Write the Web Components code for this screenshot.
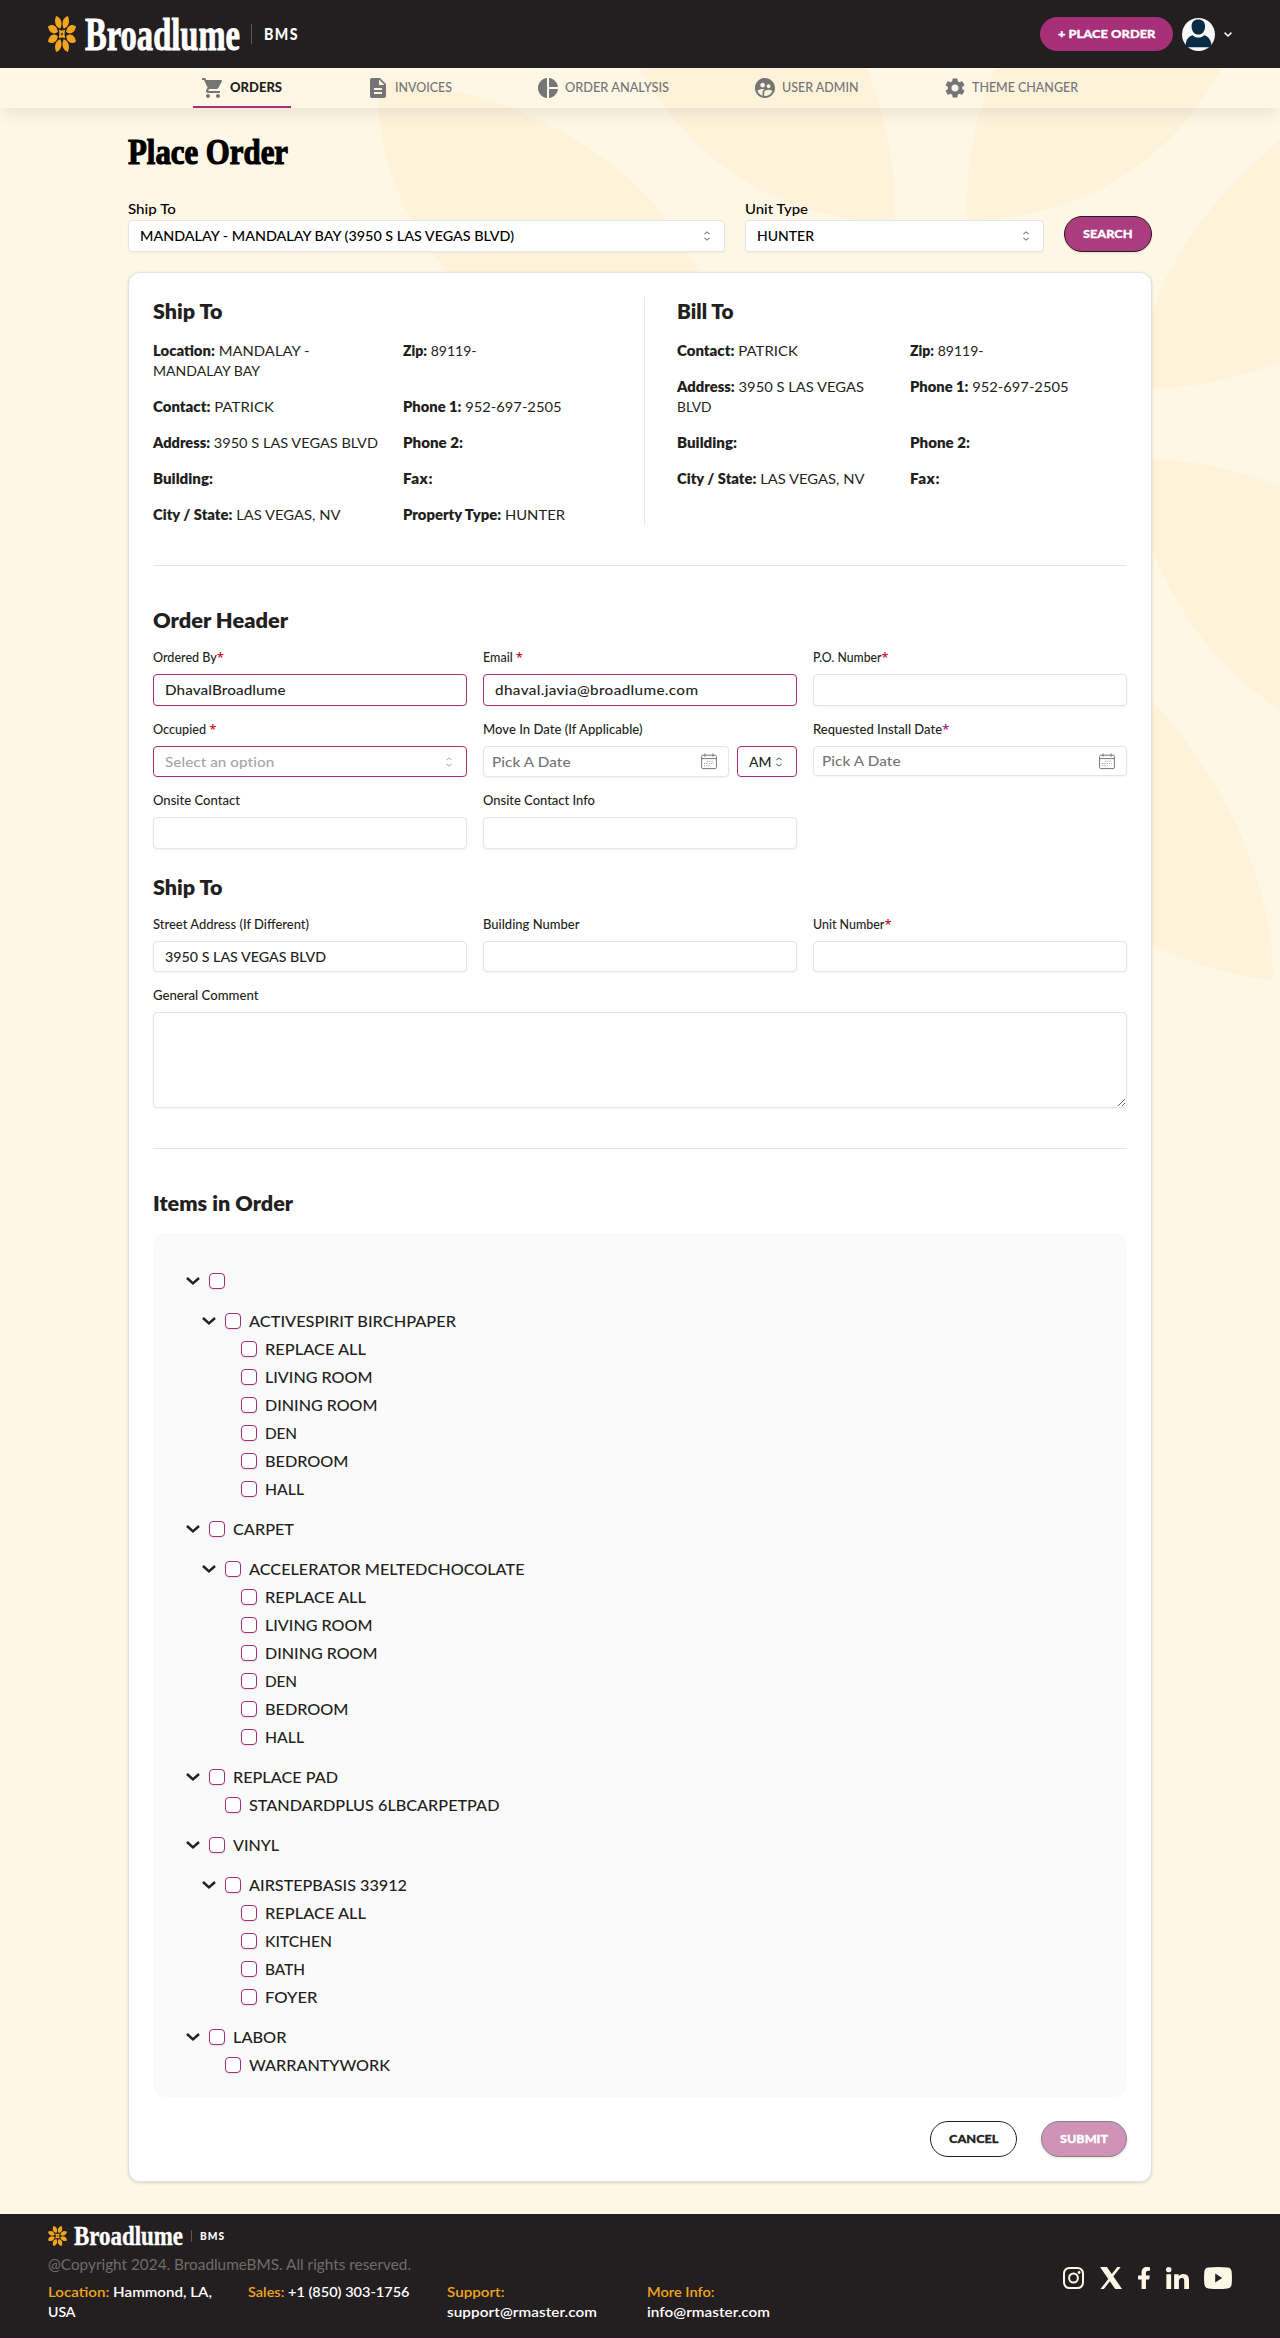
<!DOCTYPE html>
<html lang="en">
<head>
<meta charset="utf-8">
<title>Broadlume BMS - Place Order</title>
<style>
html,body{margin:0;padding:0}
body{font-family:Lato,"Open Sans",sans-serif;font-size:14px;line-height:20px;color:#231f20;background:#fff7e5;--brand:#a62f78;--ink:#231f20;--line:#e5e5e5}
</style>
</head>
<body>
<order-page></order-page>
<script>
const define=(name,render)=>customElements.define(name,class extends HTMLElement{
  constructor(){super();this.attachShadow({mode:'open'});}
  connectedCallback(){
    if(this.shadowRoot.childNodes.length)return;
    const t=document.createElement('template');
    t.innerHTML=render(k=>this.getAttribute(k)||'',this);
    this.shadowRoot.append(t.content.cloneNode(true));
  }
});

const ICONS={
cart:['0 0 24 24','<path d="M7 18c-1.1 0-1.99.9-1.99 2S5.9 22 7 22s2-.9 2-2-.9-2-2-2zM1 2v2h2l3.6 7.59-1.35 2.45c-.16.28-.25.61-.25.96 0 1.1.9 2 2 2h12v-2H7.42c-.14 0-.25-.11-.25-.25l.03-.12.9-1.63h7.45c.75 0 1.41-.41 1.75-1.03l3.58-6.49c.08-.14.12-.31.12-.48 0-.55-.45-1-1-1H5.21l-.94-2H1zm16 16c-1.1 0-1.99.9-1.99 2s.89 2 1.99 2 2-.9 2-2-.9-2-2-2z"/>'],
doc:['0 0 24 24','<path d="M14 2H6c-1.1 0-1.99.9-1.99 2L4 20c0 1.1.89 2 1.99 2H18c1.1 0 2-.9 2-2V8l-6-6zm2 16H8v-2h8v2zm0-4H8v-2h8v2zm-3-5V3.5L18.5 9H13z"/>'],
pie:['0 0 24 24','<path d="M11 2v20c-5.07-.5-9-4.79-9-10s3.93-9.5 9-10zm2.03 0v8.99H22c-.47-4.74-4.24-8.52-8.97-8.99zm0 11.01V22c4.74-.47 8.5-4.25 8.97-8.99h-8.97z"/>'],
users:['0 0 24 24','<path d="M11.99 2c-5.52 0-10 4.48-10 10s4.48 10 10 10 10-4.48 10-10-4.48-10-10-10zm3.61 6.34c1.07 0 1.93.86 1.93 1.93 0 1.07-.86 1.93-1.93 1.93-1.07 0-1.93-.86-1.93-1.93-.01-1.07.86-1.93 1.93-1.93zm-6-1.58c1.3 0 2.36 1.06 2.36 2.36 0 1.3-1.06 2.36-2.36 2.36s-2.36-1.06-2.36-2.36c0-1.31 1.05-2.36 2.36-2.36zm0 9.13v3.75c-2.4-.75-4.3-2.6-5.14-4.96 1.05-1.12 3.67-1.69 5.14-1.69.53 0 1.2.08 1.9.22-1.64.87-1.9 2.02-1.9 2.68zM11.99 20c-.27 0-.53-.01-.79-.04v-4.07c0-1.42 2.94-2.13 4.4-2.13 1.07 0 2.92.39 3.84 1.15-1.17 2.97-4.06 5.09-7.45 5.09z"/>'],
gear:['0 0 24 24','<path d="M19.14 12.94c.04-.3.06-.61.06-.94 0-.32-.02-.64-.07-.94l2.03-1.58c.18-.14.23-.41.12-.61l-1.92-3.32c-.12-.22-.37-.29-.59-.22l-2.39.96c-.5-.38-1.03-.7-1.62-.94l-.36-2.54c-.04-.24-.24-.41-.48-.41h-3.84c-.24 0-.43.17-.47.41l-.36 2.54c-.59.24-1.13.57-1.62.94l-2.39-.96c-.22-.08-.47 0-.59.22L2.74 8.87c-.12.21-.08.47.12.61l2.03 1.58c-.05.3-.09.63-.09.94s.02.64.07.94l-2.03 1.58c-.18.14-.23.41-.12.61l1.92 3.32c.12.22.37.29.59.22l2.39-.96c.5.38 1.03.7 1.62.94l.36 2.54c.05.24.24.41.48.41h3.84c.24 0 .44-.17.47-.41l.36-2.54c.59-.24 1.13-.56 1.62-.94l2.39.96c.22.08.47 0 .59-.22l1.92-3.32c.12-.22.07-.47-.12-.61l-2.01-1.58zM12 15.6c-1.98 0-3.6-1.62-3.6-3.6s1.62-3.6 3.6-3.6 3.6 1.62 3.6 3.6-1.62 3.6-3.6 3.6z"/>'],
down:['0 0 14 8','<path d="M1 1l6 5.400 6-5.400" fill="none" stroke="currentColor" stroke-width="2.500"/>'],
updown:['0 0 8 10','<path d="M1.4 3.2L4 .9l2.6 2.3M1.4 6.8L4 9.1l2.6-2.3" fill="none" stroke="currentColor" stroke-width="1.1"/>'],
calendar:['0 0 16 17','<g fill="none" stroke="currentColor"><rect x=".6" y="2.2" width="14.8" height="13.4" rx="1.2"/><path d="M.6 5.6h14.8M4 .3v3.6M12 .3v3.6"/><path d="M6 8.3h7M3 10.5h10M3 12.7h7" stroke-dasharray="1.2 1.1" stroke-width=".9" opacity=".75"/></g>'],
instagram:['0 0 21 22','<g fill="none" stroke="currentColor" stroke-width="2"><rect x="1" y="1" width="19" height="20" rx="5.4"/><ellipse cx="10.5" cy="11" rx="4.4" ry="4.6"/></g><circle cx="16.1" cy="5.5" r="1.4"/>'],
x:['0 .75 16 14.5','<path d="M12.6.75h2.454l-5.36 6.142L16 15.25h-4.937l-3.867-5.07-4.425 5.07H.316l5.733-6.57L0 .75h5.063l3.495 4.633L12.601.75Z"/>'],
facebook:['22 0 276 512','<path d="M279.14 288l14.22-92.66h-88.91v-60.13c0-25.35 12.42-50.06 52.24-50.06h40.42V6.26S260.43 0 225.36 0c-73.22 0-121.08 44.38-121.08 124.72v70.62H22.89V288h81.39v224h100.17V288z"/>'],
linkedin:['0 0 448 448','<path d="M100.28 448H7.4V148.9h92.88zM53.79 108.1C24.09 108.1 0 83.5 0 53.8a53.79 53.79 0 0 1 107.58 0c0 29.7-24.1 54.3-53.79 54.3zM447.9 448h-92.68V302.4c0-34.7-.7-79.2-48.29-79.2-48.29 0-55.69 37.7-55.69 76.7V448h-92.78V148.9h89.08v40.8h1.3c12.4-23.5 42.69-48.3 87.88-48.3 94 0 111.28 61.9 111.28 142.3V448z"/>'],
youtube:['0 0 28 22','<path fill-rule="evenodd" d="M4.5.6Q14-.4 23.5.6 27 .9 27.6 4.2 28.3 11 27.6 17.8 27 21.100 23.500 21.400 14 22.400 4.500 21.400 1 21.100.400 17.800-.300 11 .400 4.200 1 .900 4.500.600ZM11.200 6.600v8.800l7-4.400Z"/>'],
avatar:['0 0 33 33','<circle cx="16.5" cy="16.500" r="16.500" fill="#f7f7f7"/><path fill="#0b2a45" d="M16.300 1.500c4.200 0 6.800 2.700 6.800 6.700 0 4.500-2.700 8.400-6.800 8.400s-6.700-3.900-6.700-8.400c0-4 2.500-6.700 6.700-6.700zM3.400 29.300c.200-6.500 2.500-11 7.300-12 1.400 1.600 3.500 2.300 5.700 2.300s4.300-.7 5.700-2.300c4.800 1 7.300 5.500 7.700 12z"/>'],
flower:['0 0 100 100',[22.5,67.5,112.5,157.5,202.5,247.5,292.5,337.5].map(a=>`<path transform="rotate(${a} 50 50)" d="M50 34C34 23 37 5 50-4 63 5 66 23 50 34Z"/>`).join('')+'<path fill-rule="evenodd" d="M39 38q11 4 22 0-4 12 0 24-11-4-22 0 4-12 0-24ZM50 46l-4 4 4 4 4-4Z"/>']
};
define('app-icon',a=>{const [vb,body]=ICONS[a('name')];const w=a('w')||24,h=a('h')||w;
  return `<style>:host{display:inline-flex;flex:none}svg{display:block;fill:currentColor;overflow:visible}</style><svg width="${w}" height="${h}" viewBox="${vb}" preserveAspectRatio="none" aria-hidden="true">${body}</svg>`;});

define('brand-logo',a=>{const s=a('size')==='small';return `<style>
:host{display:flex;align-items:center;color:#fff}
app-icon{color:#f0a51e;margin-right:${s?7:9}px}
.name{font:700 ${s?27:47}px/${s?20:36}px "Liberation Serif",serif;-webkit-text-stroke:${s?.4:1}px #fff;white-space:nowrap}
.bar{width:1px;height:${s?12:20}px;background:#5c595a;margin:0 ${s?8:12}px 0 ${s?8:11}px}
.bms{font-size:${s?10.5:17.500}px;font-weight:900;line-height:20px;letter-spacing:${s?1:1.800}px}
</style><app-icon name="flower" w="${s?19:28}" h="${s?20:36}"></app-icon>
<fit-text class="name" mode="scale" w="${s?109:155}">Broadlume</fit-text><i class="bar"></i><fit-text class="bms" mode="scale" w="${s?25:35}">BMS</fit-text>`;});

define('pill-button',a=>`<style>
:host{display:flex;align-items:center;justify-content:center;box-sizing:border-box;height:36px;width:${a('box')}px;border:1px solid var(--ink);border-radius:18px;background:#fff;color:var(--ink);font-weight:900;font-size:12px;line-height:16px;white-space:nowrap;-webkit-text-stroke:.3px currentColor}
:host([kind=primary]){background:#ab3c7e;color:#fff;box-shadow:0 1px 2px rgba(0,0,0,.12)}
:host([kind=nav]){background:var(--brand);border-color:var(--brand);color:#fff;height:34px}
:host([kind=off]){background:#ab3c7e;color:#fff;opacity:.55;box-shadow:0 1px 3px rgba(0,0,0,.2)}
</style><fit-text w="${a('text')}"><slot></slot></fit-text>`);

define('site-header',()=>`<style>
:host{display:flex;align-items:center;justify-content:space-between;height:68px;padding:0 48px;background:var(--ink);box-sizing:border-box}
.right{display:flex;align-items:center;color:#fff}
.right app-icon{margin-left:9px}
</style><brand-logo></brand-logo><div class="right"><pill-button kind="nav" box="133" text="97.5">+ PLACE ORDER</pill-button><app-icon name="avatar" w="33"></app-icon><app-icon name="down" w="8" h="5"></app-icon></div>`);

define('nav-item',a=>`<style>
:host{display:flex;align-items:center;gap:5px;height:40px;padding:0 9px 0 8px;box-sizing:border-box;color:#757575;font-size:12.500px;border-bottom:2px solid transparent;padding-top:2px}
:host([active]){border-color:var(--brand)}
:host([active]) fit-text{color:var(--ink);font-weight:900}
fit-text{font-weight:500}
</style><app-icon name="${a('icon')}" w="24"></app-icon><fit-text w="${a('text')}"><slot></slot></fit-text>`);

define('site-nav',()=>`<style>
:host{display:flex;justify-content:center;gap:67px;height:40px;box-shadow:0 10px 15px -3px rgba(0,0,0,.07)}
</style><nav-item icon="cart" text="52" active>ORDERS</nav-item><nav-item icon="doc" text="57">INVOICES</nav-item><nav-item icon="pie" text="104">ORDER ANALYSIS</nav-item><nav-item icon="users" text="76.5">USER ADMIN</nav-item><nav-item icon="gear" text="106">THEME CHANGER</nav-item>`);

/* one labelled control: text box, select, or date box */
define('form-field',a=>{
  const kind=a('kind'),req=a('req');
  return `<style>
:host{display:block;min-width:0}
.label{font-size:12.500px;font-weight:500;line-height:16px;display:block;height:16px;margin-bottom:8px}
:host([big]) .label{font-size:14px;line-height:18px;height:20px;margin-bottom:0;color:#000}
b{font:600 13px/1px "Open Sans",sans-serif;color:#c51d24}b.brand{color:var(--brand)}
.row{display:flex;gap:8px}
.box{display:flex;flex:1;align-items:center;justify-content:space-between;box-sizing:border-box;height:${a('h')||32}px;border:1px solid var(--line);border-radius:4px;background:#fff;padding:0 11px;font-size:14px;font-weight:500;box-shadow:0 1px 2px rgba(0,0,0,.05)}
.hot{border-color:var(--brand)}
.box app-icon{color:#777}
.hint .box:first-child{color:#a6a6a6}.hint .box app-icon{color:#bbb}
.select{padding-right:13px}
.date{padding:0 11px 0 8px;color:#757575}
.ampm{flex:none;width:60px;padding:0 13px 0 11px}
:host([big]) .box{color:#000}
</style><span class="label"><fit-text w="${a('lw')}">${a('label')}${req?`${req==='spaced'?' ':''}<b${req==='brand'?' class="brand"':''}>*</b>`:''}</fit-text></span>
<div class="row ${a('hint')?'hint':''}"><div class="box ${kind} ${a('hot')?'hot':''}"><span>${a('value')?`<fit-text w="${a('vw')}">${a('value')}</fit-text>`:''}</span>${kind==='select'?'<app-icon name="updown" w="8" h="10"></app-icon>':kind==='date'?'<app-icon name="calendar" w="16" h="17"></app-icon>':''}</div>${a('ampm')?'<div class="box hot ampm"><fit-text w="22.5">AM</fit-text><app-icon name="updown" w="8" h="10"></app-icon></div>':''}</div>`;});

define('section-title',a=>`<style>:host{display:block;font-size:20px;line-height:28px;height:28px;font-weight:800}</style><fit-text w="${a('w')}"><slot></slot></fit-text>`);

/* address block: a title over a two-column grid of "label: value" cells */
define('info-panel',(a,el)=>{
  const cells=JSON.parse(el.querySelector('script').textContent);
  return `<style>:host{display:block}
.grid{display:grid;grid-template-columns:${a('cols')};gap:16px;margin-top:16px}
p{margin:0;font-size:14px;line-height:20px}b{font-weight:800}fit-text{vertical-align:top}
</style><section-title w="${a('tw')}">${a('title')}</section-title><div class="grid">${cells.map(([k,v,w,v2,w2])=>`<p><fit-text w="${w}"><b>${k}:</b>${v?' '+v:''}</fit-text>${v2?`<br><fit-text w="${w2}">${v2}</fit-text>`:''}</p>`).join('')}</div>`;});

define('tree-row',a=>`<style>
:host{display:flex;align-items:center;height:28px;padding-left:${a('depth')*16}px;font-size:16px;font-weight:500}
:host([branch]){margin-top:12px}
.arrow{box-sizing:border-box;width:24px;padding-left:1px;display:flex;color:#231f20}
.check{box-sizing:border-box;width:16px;height:16px;border:1px solid var(--brand);border-radius:4px;background:#fff;margin-right:8px;box-shadow:0 1px 2px rgba(0,0,0,.1)}
</style><span class="arrow">${a('branch')?'<app-icon name="down" w="14" h="8"></app-icon>':''}</span><span class="check"></span>${a('w')?`<fit-text w="${a('w')}"><slot></slot></fit-text>`:''}`);

const ROOMS=[['REPLACE ALL',101],['LIVING ROOM',107.5],['DINING ROOM',112.5],['DEN',32],['BEDROOM',83.5],['HALL',39]];
const leaves=l=>l.map(([t,w])=>[2,0,t,w]);
const TREE=[[0,1,'',0],[1,1,'ACTIVESPIRIT BIRCHPAPER',207],...leaves(ROOMS),
[0,1,'CARPET',61],[1,1,'ACCELERATOR MELTEDCHOCOLATE',275.5],...leaves(ROOMS),
[0,1,'REPLACE PAD',105],[1,0,'STANDARDPLUS 6LBCARPETPAD',250.5],
[0,1,'VINYL',46],[1,1,'AIRSTEPBASIS 33912',158],...leaves([['REPLACE ALL',101],['KITCHEN',67],['BATH',40],['FOYER',52.5]]),
[0,1,'LABOR',53.5],[1,0,'WARRANTYWORK',141]];
define('item-tree',()=>`<style>:host{display:block;background:#fafafa;border-radius:12px;padding:22px 0 18px 32px}</style>${TREE.map(([d,b,t,w])=>`<tree-row depth="${d}"${b?' branch="1"':''}${w?` w="${w}"`:''}>${t}</tree-row>`).join('')}`);

define('petal-backdrop',()=>`<style>:host{display:block;position:absolute;inset:0;z-index:-1;overflow:hidden}svg{display:block}</style>
<svg width="1280" height="1000" viewBox="0 0 1280 1000" fill="#fef2db"><path d="M378 81C500 84 640 150 698 270L720 400C560 400 372 270 378 81Z"/><path d="M640 68C690 160 775 220 895 223C897 170 885 115 867 68Z"/><path d="M1222 68C1172 160 1087 217 967 221C965 170 975 115 995 68Z"/><path d="M1280 140C1220 190 1170 250 1150 320V388C1200 388 1240 378 1280 362Z"/><path d="M1150 460C1200 460 1240 470 1280 487V710C1220 670 1180 620 1150 545Z"/><path d="M1150 698C1225 780 1273 880 1273 980C1225 975 1185 962 1150 944Z"/></svg>`);

define('order-card',()=>`<style>
:host{display:block;box-sizing:border-box;background:#fff;border:1px solid #e2e2e6;border-radius:12px;padding:24px;box-shadow:0 1px 3px rgba(0,0,0,.14)}
.top{display:flex;height:228px}
.top info-panel:first-child{width:491px;border-right:1px solid #e8e8e8;margin-right:32px}
hr{border:0;border-top:1px solid #e4e4e4;margin:40px 0}
.grid{display:grid;grid-template-columns:repeat(3,314px);column-gap:16px;margin-top:16px}
textarea{display:block;box-sizing:border-box;width:100%;height:96px;border:1px solid var(--line);border-radius:4px;background:#fff;box-shadow:0 1px 2px rgba(0,0,0,.05);outline:0}
.lab{display:block;font-size:12.500px;line-height:16px;font-weight:500;height:16px;margin:16px 0 8px}
.actions{display:flex;justify-content:flex-end;gap:24px;margin-top:24px}
</style>
<div class="top">
<info-panel title="Ship To" tw="69.5" cols="233.5px 1fr"><script type="application/json">[["Location","MANDALAY -",156.5,"MANDALAY BAY",107],["Zip","89119-",73.5],["Contact","PATRICK",121],["Phone 1","952-697-2505",158.5],["Address","3950 S LAS VEGAS BLVD",225],["Phone 2","",60],["Building","",60],["Fax","",29.5],["City / State","LAS VEGAS, NV",187.5],["Property Type","HUNTER",162]]<\/script></info-panel>
<info-panel title="Bill To" tw="56.5" cols="217px 217px"><script type="application/json">[["Contact","PATRICK",121],["Zip","89119-",73.5],["Address","3950 S LAS VEGAS",187,"BLVD",34.5],["Phone 1","952-697-2505",158.5],["Building","",60],["Phone 2","",60],["City / State","LAS VEGAS, NV",187.5],["Fax","",29.5]]<\/script></info-panel>
</div>
<hr>
<section-title w="135">Order Header</section-title>
<div class="grid">
<form-field label="Ordered By" lw="71" req="tight" value="DhavalBroadlume" vw="120.5" hot="1"></form-field>
<form-field label="Email" lw="40" req="spaced" value="dhaval.javia@broadlume.com" vw="203" hot="1"></form-field>
<form-field label="P.O. Number" lw="75.5" req="tight"></form-field>
</div>
<div class="grid">
<form-field label="Occupied" lw="63.5" req="spaced" kind="select" value="Select an option" vw="109.5" hot="1" hint="1" h="31"></form-field>
<form-field label="Move In Date (If Applicable)" lw="159.5" kind="date" value="Pick A Date" vw="78.5" ampm="1" h="31"></form-field>
<form-field label="Requested Install Date" lw="136.5" req="brand" kind="date" value="Pick A Date" vw="78.5" h="30"></form-field>
</div>
<div class="grid">
<form-field label="Onsite Contact" lw="87"></form-field>
<form-field label="Onsite Contact Info" lw="112"></form-field>
</div>
<section-title w="69.5" style="margin-top:24px">Ship To</section-title>
<div class="grid">
<form-field label="Street Address (If Different)" lw="156" value="3950 S LAS VEGAS BLVD" vw="161" h="31"></form-field>
<form-field label="Building Number" lw="96.5" h="31"></form-field>
<form-field label="Unit Number" lw="78.5" req="tight" h="31"></form-field>
</div>
<span class="lab"><fit-text w="105.5">General Comment</fit-text></span>
<textarea aria-label="General Comment"></textarea>
<hr>
<section-title w="140">Items in Order</section-title>
<item-tree style="margin-top:16px"></item-tree>
<div class="actions"><pill-button box="87" text="49.5">CANCEL</pill-button><pill-button box="86" text="48" kind="off">SUBMIT</pill-button></div>`);

define('site-footer',()=>`<style>
:host{display:flex;justify-content:space-between;box-sizing:border-box;height:124px;padding:12px 48px 0;background:var(--ink);color:#fff;border-bottom:1px solid #2b1726}
.copy{color:#6f6c6d;font-size:14.500px;line-height:20px;margin-top:9px}
.cols{display:grid;grid-template-columns:repeat(4,199.500px);margin-top:7px;font-size:14px;line-height:20px}
.cols fit-text{vertical-align:top;font-weight:600}
em{font-style:normal;color:#f0a51e}
.social{display:flex;align-items:center;gap:16px;height:22px;margin-top:41px;color:#fff7e6}
brand-logo{height:20px}
</style><div><brand-logo size="small"></brand-logo>
<div class="copy"><fit-text w="363">@Copyright 2024. BroadlumeBMS. All rights reserved.</fit-text></div>
<div class="cols"><div><fit-text w="164"><em>Location:</em> Hammond, LA,</fit-text><br><fit-text w="27.5">USA</fit-text></div><div><fit-text w="161.5"><em>Sales:</em> +1 (850) 303-1756</fit-text></div><div><fit-text w="57.5"><em>Support:</em></fit-text><br><fit-text w="150">support@rmaster.com</fit-text></div><div><fit-text w="67.5"><em>More Info:</em></fit-text><br><fit-text w="123">info@rmaster.com</fit-text></div></div></div>
<div class="social"><app-icon name="instagram" w="21" h="22"></app-icon><app-icon name="x" w="22" h="22"></app-icon><app-icon name="facebook" w="12" h="22"></app-icon><app-icon name="linkedin" w="23" h="22"></app-icon><app-icon name="youtube" w="28" h="22" style="margin-left:-1px"></app-icon></div>`);

define('order-page',()=>`<style>
:host{display:block;position:relative;z-index:0;width:1280px;height:2338px;overflow:hidden}
main{width:1024px;margin:0 auto;height:2106px;box-sizing:border-box;padding-top:24px}
h1{margin:0;font:700 36px/40px "Liberation Serif",serif;color:#000;-webkit-text-stroke:1.200px #000;height:40px}
.search{display:flex;align-items:flex-end;gap:20.500px;margin:28px 0 20px}
</style><petal-backdrop></petal-backdrop><site-header></site-header><site-nav></site-nav>
<main><h1><fit-text mode="scale" w="160">Place Order</fit-text></h1>
<div class="search"><form-field big style="width:596.500px" label="Ship To" lw="48" kind="select" value="MANDALAY - MANDALAY BAY (3950 S LAS VEGAS BLVD)" vw="374"></form-field><form-field big style="width:298.500px" label="Unit Type" lw="63" kind="select" value="HUNTER" vw="57"></form-field><pill-button kind="primary" box="88" text="49.5">SEARCH</pill-button></div>
<order-card></order-card></main>
<site-footer></site-footer>`);

/* Sets a run of text to a given measure: letters widen up to 9%, tracking takes the rest.
   mode="scale" does it all by condensing or widening the letters. */
customElements.define('fit-text',class extends HTMLElement{
  constructor(){super();this.attachShadow({mode:'open'}).innerHTML='<style>:host{display:inline-block;white-space:nowrap}span{display:inline-block;transform-origin:0 50%}</style><span><slot></slot></span>';}
  connectedCallback(){
    const w=+this.getAttribute('w'),s=this.shadowRoot.querySelector('span');
    const slot=this.querySelector('slot');
    const text=slot?slot.assignedNodes().map(n=>n.textContent).join(''):this.textContent;
    const n=text.trim().length,natural=s.getBoundingClientRect().width;
    if(!w||!natural||n<2)return;
    const ratio=w/natural;
    const k=this.getAttribute('mode')==='scale'?ratio:Math.min(1.09,Math.max(.96,ratio));
    const rest=(w/k-natural)/(n-1);
    s.style.transform=`scaleX(${k})`;
    if(Math.abs(rest)>.001)s.style.letterSpacing=rest+'px';
    this.style.width=w+'px';
  }
});
</script>
</body>
</html>
